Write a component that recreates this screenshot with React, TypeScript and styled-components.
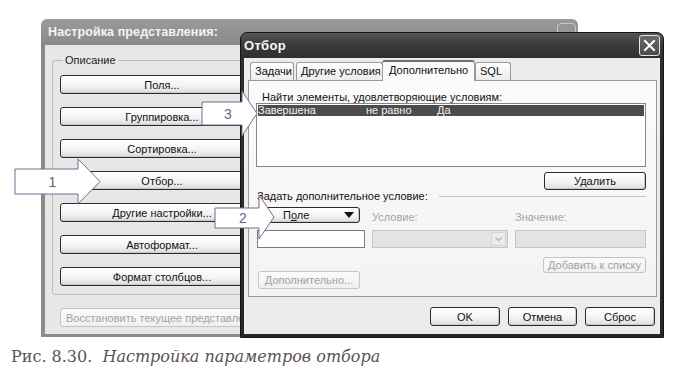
import React from 'react';
import styled, { createGlobalStyle, css } from 'styled-components';

const Global = createGlobalStyle`
  html, body { margin: 0; padding: 0; background: #ffffff; }
  body {
    width: 673px; height: 373px; overflow: hidden;
    font-family: "Liberation Sans", Arial, sans-serif;
    -webkit-font-smoothing: antialiased;
  }
  * { box-sizing: border-box; }
`;

const Page = styled.div`
  width: 673px;
  height: 373px;
  display: flex;
  flex-direction: column;
`;

const Desktop = styled.div`
  position: relative;
  height: 341px;
  flex: none;
`;

/* ---------- shared XP-like controls ---------- */

const buttonBase = css`
  font-family: "Liberation Sans", Arial, sans-serif;
  font-size: 11px;
  color: #111;
  border: 1px solid #2c2c2c;
  border-radius: 3px;
  background: linear-gradient(#ffffff, #f4f4f4 55%, #dcdcdc);
  box-shadow: inset -1px -1px 0 #c9c9c9;
  display: flex;
  align-items: center;
  justify-content: center;
  padding: 0;
  white-space: nowrap;
`;

const WinButton = styled.div<{ $w?: number; $h?: number; $disabled?: boolean }>`
  ${buttonBase};
  width: ${p => (p.$w ? `${p.$w}px` : '100%')};
  height: ${p => p.$h ?? 19}px;
  flex: none;
  ${p =>
    p.$disabled &&
    css`
      color: #a2a2a2;
      border-color: #c4c4c4;
      background: linear-gradient(#fbfbfb, #f0f0f0);
      box-shadow: none;
    `}
`;

/* ---------- back window ---------- */

const BackWindow = styled.div`
  position: absolute;
  left: 41px;
  top: 19px;
  width: 537px;
  height: 318px;
  display: flex;
  flex-direction: column;
  background: linear-gradient(#9a9a9a, #8a8a8a 26px, #8c8c8c);
  border-radius: 6px 6px 0 0;
  padding: 0 4px 3px 4px;
`;

const BackTitleBar = styled.div`
  height: 26px;
  flex: none;
  display: flex;
  align-items: center;
  justify-content: space-between;
  padding-left: 3px;
  color: #f3f3f3;
  font-weight: bold;
  font-size: 12.5px;
  letter-spacing: 0.1px;
`;

const BackClose = styled.div`
  width: 19px;
  height: 19px;
  border: 1px solid #c8c8c8;
  border-radius: 4px;
  background: #969696;
  margin-right: -2px;
`;

const BackBody = styled.div`
  flex: 1;
  background: #e7e7e7;
  padding: 9px 0 0 7px;
  display: flex;
  flex-direction: column;
  align-items: flex-start;
`;

const GroupBox = styled.fieldset`
  margin: 0;
  width: 220px;
  padding: 0 7px 8px;
  border: 1px solid #bdbdbd;
  border-radius: 3px;
`;

const GroupLegend = styled.legend`
  font-size: 11px;
  line-height: 13px;
  padding: 0 2px;
  margin-left: 3px;
  color: #1e1e1e;
`;

const ButtonStack = styled.div`
  display: flex;
  flex-direction: column;
  gap: 13px;
  padding-top: 8px;
`;

const RestoreButton = styled(WinButton)`
  margin-top: 13px;
  margin-left: 8px;
  justify-content: flex-start;
  padding-left: 5px;
`;

/* ---------- front window ---------- */

const FrontWindow = styled.div`
  position: absolute;
  left: 240px;
  top: 32px;
  width: 424px;
  height: 306px;
  display: flex;
  flex-direction: column;
  background: linear-gradient(#555555, #3a3a3a 12px, #2e2e2e 26px, #262626);
  border: 1px solid #151515;
  border-radius: 7px 7px 0 0;
  padding: 0 3px 3px;
`;

const FrontTitleBar = styled.div`
  height: 25px;
  flex: none;
  display: flex;
  align-items: center;
  justify-content: space-between;
  color: #f6f6f6;
  font-weight: bold;
  font-size: 13px;
  letter-spacing: 0.3px;
`;

const CloseButton = styled.div`
  width: 21px;
  height: 21px;
  border: 1px solid #e6e6e6;
  border-radius: 3px;
  background: linear-gradient(#6a6a6a, #4a4a4a);
  display: flex;
  align-items: center;
  justify-content: center;
`;

const FrontBody = styled.div`
  flex: 1;
  background: #ececec;
  padding: 2px 3px 0 4px;
  display: flex;
  flex-direction: column;
`;

const TabRow = styled.div`
  height: 20px;
  flex: none;
  display: flex;
  align-items: flex-end;
  padding-left: 2px;
  position: relative;
  z-index: 1;
`;

const Tab = styled.div<{ $w: number; $active?: boolean; $gap?: number }>`
  width: ${p => p.$w}px;
  margin-left: ${p => p.$gap ?? 0}px;
  height: 18px;
  border: 1px solid #9a9a9a;
  border-bottom: none;
  border-radius: 3px 3px 0 0;
  background: linear-gradient(#ffffff, #ececec);
  font-size: 11px;
  line-height: 17px;
  padding-left: 4px;
  color: #111;
  white-space: nowrap;
  ${p =>
    p.$active &&
    css`
      height: 21px;
      margin-bottom: -1px;
      background: #fbfbfb;
      border-top: 2px solid #6e6e6e;
      line-height: 17px;
      padding-left: 6px;
    `}
`;

const TabPanel = styled.div`
  height: 217px;
  flex: none;
  border: 1px solid #9a9a9a;
  background: linear-gradient(#fbfbfb, #f3f3f3);
  padding: 10px 10px 0 8px;
  display: flex;
  flex-direction: column;
`;

const Label = styled.div<{ $muted?: boolean; $indent?: number }>`
  font-size: 11px;
  line-height: 12px;
  height: 12px;
  color: ${p => (p.$muted ? '#a4a4a4' : '#111')};
  margin-left: ${p => p.$indent ?? 0}px;
  white-space: nowrap;
`;

const ListBox = styled.div`
  height: 64px;
  margin-left: -1px;
  border: 1px solid #858585;
  background: #ffffff;
  padding: 1px;
`;

const ListRow = styled.div<{ $selected?: boolean }>`
  display: grid;
  grid-template-columns: 108px 71px 1fr;
  height: 11px;
  font-size: 11px;
  line-height: 11px;
  color: ${p => (p.$selected ? '#f2f2f2' : '#111')};
  background: ${p => (p.$selected ? '#4c4c4c' : 'transparent')};
`;

const RightRow = styled.div<{ $top: number }>`
  display: flex;
  justify-content: flex-end;
  margin-top: ${p => p.$top}px;
`;

const SectionHeading = styled.div`
  display: flex;
  align-items: center;
  height: 12px;
  font-size: 11px;
  line-height: 12px;
  color: #111;
  white-space: nowrap;
  &::after {
    content: '';
    flex: 1;
    margin-left: 11px;
    border-top: 1px solid #c6c6c6;
  }
`;

const ConditionGrid = styled.div`
  display: grid;
  grid-template-columns: 108px 136px 131px;
  grid-template-rows: 16px 18px;
  column-gap: 7px;
  row-gap: 7px;
  margin-top: 5px;
`;

const FieldButton = styled(WinButton)`
  margin-left: 1px;
  justify-content: space-between;
  padding: 0 5px 0 24px;
`;

const Accel = styled.span`
  text-decoration: underline;
`;

const BottomLabel = styled(Label)`
  align-self: end;
`;

const TextInput = styled.div<{ $disabled?: boolean }>`
  height: 18px;
  border: 1px solid ${p => (p.$disabled ? '#c6c6c6' : '#7a7a7a')};
  background: ${p => (p.$disabled ? '#e3e3e3' : '#ffffff')};
`;

const ComboBox = styled(TextInput)`
  display: flex;
  justify-content: flex-end;
  padding: 1px;
`;

const ComboArrow = styled.div`
  width: 15px;
  height: 14px;
  border: 1px solid #d4d4d4;
  border-radius: 2px;
  background: #ececec;
  display: flex;
  align-items: center;
  justify-content: center;
`;

const ActionArea = styled.div`
  display: flex;
  justify-content: space-between;
  align-items: flex-start;
  margin-top: 9px;
`;

const MoreButton = styled(WinButton)`
  margin-top: 14px;
  margin-left: 1px;
`;

const DialogButtons = styled.div`
  display: flex;
  justify-content: flex-end;
  gap: 8px;
  margin-top: 10px;
  padding-right: 2px;
`;

/* ---------- callouts & caption ---------- */

const CalloutLayer = styled.svg`
  position: absolute;
  left: 0;
  top: 0;
  width: 673px;
  height: 341px;
  pointer-events: none;
  overflow: visible;
`;

const Caption = styled.div`
  padding: 6px 0 0 11px;
  font-family: "DejaVu Serif", "Liberation Serif", serif;
  font-size: 16px;
  line-height: 20px;
  color: #5b5353;
  white-space: pre;
`;

const CaptionEm = styled.em`
  font-style: italic;
`;

const callouts = [
  { n: '1', x0: 15, x1: 78, tip: 100, y0: 169, y1: 194, h0: 159, h1: 204 },
  { n: '3', x0: 202, x1: 242, tip: 257, y0: 102, y1: 125, h0: 91, h1: 136 },
  { n: '2', x0: 215, x1: 259, tip: 274, y0: 208, y1: 228, h0: 195, h1: 239 },
];

const backButtons = [
  'Поля...',
  'Группировка...',
  'Сортировка...',
  'Отбор...',
  'Другие настройки...',
  'Автоформат...',
  'Формат столбцов...',
];

export default function App() {
  return (
    <Page>
      <Global />
      <Desktop>
        <BackWindow>
          <BackTitleBar>
            <span>Настройка представления:</span>
            <BackClose />
          </BackTitleBar>
          <BackBody>
            <GroupBox>
              <GroupLegend>Описание</GroupLegend>
              <ButtonStack>
                {backButtons.map(b => (
                  <WinButton key={b}>{b}</WinButton>
                ))}
              </ButtonStack>
            </GroupBox>
            <RestoreButton $w={320} $disabled>
              Восстановить текущее представление
            </RestoreButton>
          </BackBody>
        </BackWindow>

        <FrontWindow>
          <FrontTitleBar>
            <span>Отбор</span>
            <CloseButton>
              <svg width="13" height="13" viewBox="0 0 13 13">
                <path d="M2 2 L11 11 M11 2 L2 11" stroke="#ffffff" strokeWidth="2" strokeLinecap="square" />
              </svg>
            </CloseButton>
          </FrontTitleBar>
          <FrontBody>
            <TabRow>
              <Tab $w={44}>Задачи</Tab>
              <Tab $w={87} $gap={2}>Другие условия</Tab>
              <Tab $w={93} $gap={-1} $active>Дополнительно</Tab>
              <Tab $w={36} $gap={0}>SQL</Tab>
            </TabRow>
            <TabPanel>
              <Label $indent={5}>Найти элементы, удовлетворяющие условиям:</Label>
              <ListBox>
                <ListRow $selected>
                  <span>Завершена</span>
                  <span>не равно</span>
                  <span>Да</span>
                </ListRow>
              </ListBox>
              <RightRow $top={5}>
                <WinButton $w={102} $h={18}>Удалить</WinButton>
              </RightRow>
              <SectionHeading>Задать дополнительное условие:</SectionHeading>
              <ConditionGrid>
                <FieldButton $w={102} $h={16}>
                  <span>
                    П<Accel>о</Accel>ле
                  </span>
                  <svg width="10" height="6" viewBox="0 0 10 6">
                    <path d="M0 0 H10 L5 6 Z" fill="#111" />
                  </svg>
                </FieldButton>
                <BottomLabel $muted>Условие:</BottomLabel>
                <BottomLabel $muted>Значение:</BottomLabel>
                <TextInput />
                <ComboBox $disabled>
                  <ComboArrow>
                    <svg width="7" height="5" viewBox="0 0 7 5">
                      <path d="M0.5 0.5 L3.5 3.5 L6.5 0.5" stroke="#b4b4b4" strokeWidth="1.3" fill="none" />
                    </svg>
                  </ComboArrow>
                </ComboBox>
                <TextInput $disabled />
              </ConditionGrid>
              <ActionArea>
                <MoreButton $w={102} $h={18} $disabled>Дополнительно...</MoreButton>
                <WinButton $w={103} $h={16} $disabled>Добавить к списку</WinButton>
              </ActionArea>
            </TabPanel>
            <DialogButtons>
              <WinButton $w={70}>OK</WinButton>
              <WinButton $w={69}>Отмена</WinButton>
              <WinButton $w={70}>Сброс</WinButton>
            </DialogButtons>
          </FrontBody>
        </FrontWindow>

        <CalloutLayer viewBox="0 0 673 341">
          {callouts.map(c => {
            const mid = (c.h0 + c.h1) / 2;
            const pts = [
              [c.x0, c.y0],
              [c.x1, c.y0],
              [c.x1, c.h0],
              [c.tip, mid],
              [c.x1, c.h1],
              [c.x1, c.y1],
              [c.x0, c.y1],
            ]
              .map(p => p.join(','))
              .join(' ');
            return (
              <g key={c.n}>
                <polygon points={pts} fill="#ffffff" stroke="#7c6690" strokeWidth="1" />
                <text
                  x={(c.x0 + c.x1) / 2 + 6}
                  y={(c.y0 + c.y1) / 2 + 5}
                  textAnchor="middle"
                  fontFamily="Liberation Sans, Arial, sans-serif"
                  fontSize="14"
                  fill="#6e5d82"
                >
                  {c.n}
                </text>
              </g>
            );
          })}
        </CalloutLayer>
      </Desktop>
      <Caption>
        Рис. 8.30.  <CaptionEm>Настройка параметров отбора</CaptionEm>
      </Caption>
    </Page>
  );
}
